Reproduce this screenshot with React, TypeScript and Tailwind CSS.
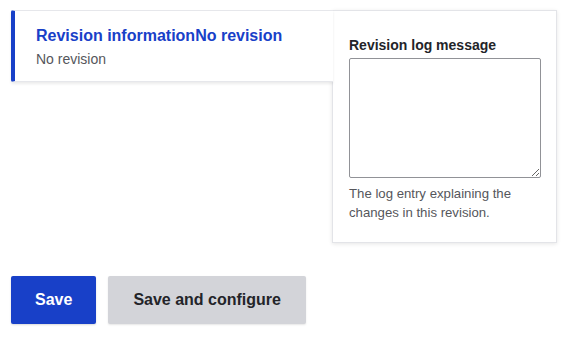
export default function App() {
  return (
    <div className="min-h-screen bg-white pl-[11px] pr-[11px] pt-[10px] font-['Liberation_Sans',Arial,sans-serif] text-[#232429]">
      <div className="flex items-start">
        <div className="relative z-10 -mr-px w-[322px] shrink-0">
          <div className="border-l-4 border-t border-b border-[#e6e7eb] border-l-[#1840c8] bg-white pl-[21px] pt-[15px] pb-[12px] shadow-[0_2px_3px_rgba(0,0,0,0.08)] rounded-l-[2px]">
            <div className="text-[16px] font-bold leading-[20px] text-[#1840c8]">Revision informationNo revision</div>
            <div className="mt-[3px] text-[14px] leading-[20px] text-[#55565b]">No revision</div>
          </div>
        </div>
        <div className="w-[225px] border border-[#e3e4e8] bg-white px-4 pt-[25px] pb-[20px] shadow-[0_1px_4px_rgba(0,0,0,0.1)]">
          <label className="block text-[14px] font-bold leading-[18px] text-[#232429]">Revision log message</label>
          <textarea className="mt-[4px] block h-[120px] w-[192px] rounded-[2px] border border-[#919297] bg-white" />
          <p className="mt-[6px] text-[13.2px] leading-[19px] text-[#55565b]">
            The log entry explaining the changes in this revision.
          </p>
        </div>
      </div>
      <div className="mt-[33px] flex gap-3">
        <button className="h-[48px] rounded-[2px] bg-[#1840c8] px-6 text-[16px] font-bold text-white shadow-[0_1px_2px_rgba(0,0,0,0.15)]">Save</button>
        <button className="h-[48px] rounded-[2px] bg-[#d3d4d9] px-[25px] text-[16px] font-bold text-[#232429] shadow-[0_1px_2px_rgba(0,0,0,0.1)]">Save and configure</button>
      </div>
    </div>
  );
}
